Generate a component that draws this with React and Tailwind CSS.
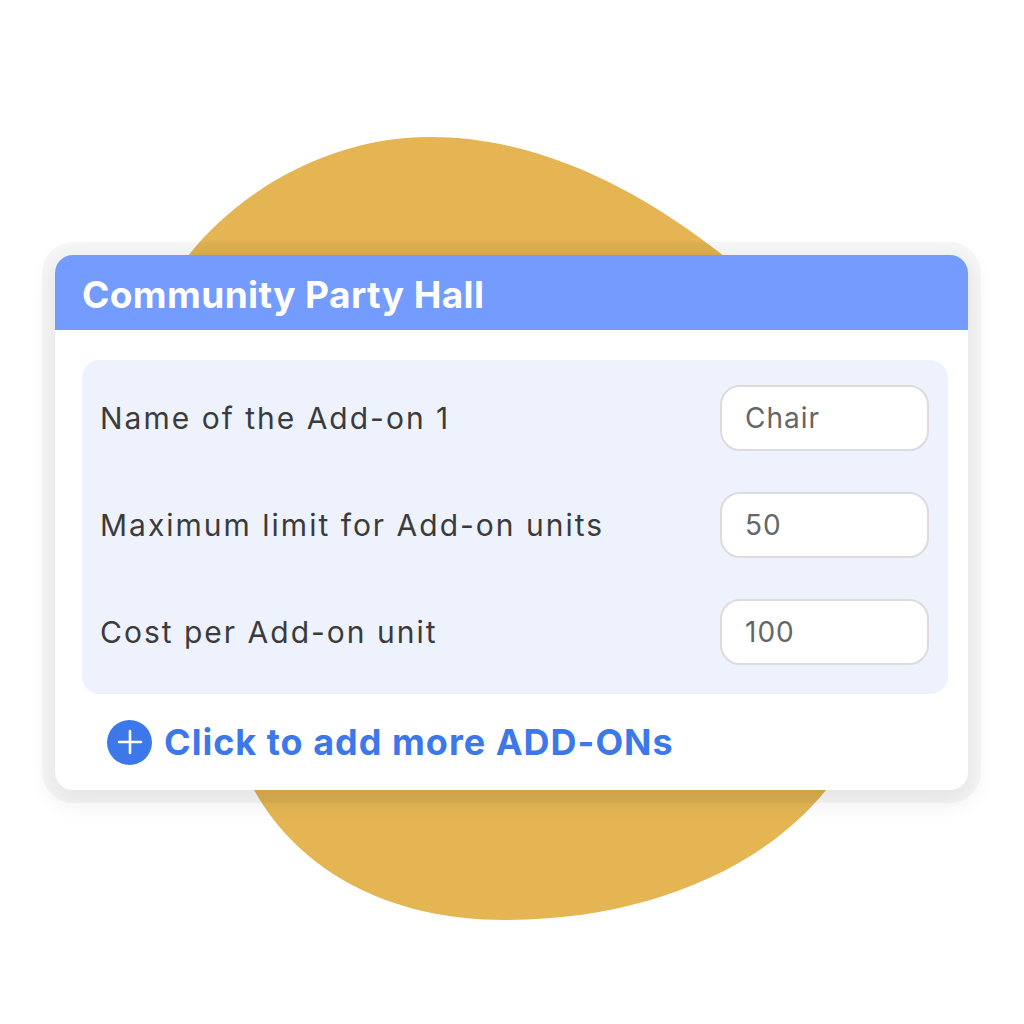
export default function App() {
  const rows = [
    { label: 'Name of the Add-on 1', value: 'Chair' },
    { label: 'Maximum limit for Add-on units', value: '50' },
    { label: 'Cost per Add-on unit', value: '100' },
  ];

  return (
    <div
      className="relative w-[1024px] h-[1024px] bg-white overflow-hidden"
      style={{ fontFamily: 'Inter, "Open Sans", sans-serif' }}
    >
      {/* yellow blob behind the card */}
      <svg className="absolute inset-0" width="1024" height="1024" viewBox="0 0 1024 1024">
        <path
          d="M430 137 C540 137 640 190 724 256 C820 330 900 600 826 790 C760 872 640 920 505 920 C390 920 300 872 254 790 C150 600 120 380 188 256 C240 190 330 137 430 137 Z"
          fill="#e4b552"
        />
      </svg>

      <div className="relative pt-[255px] pl-[55px]">
        <div className="w-[913px] h-[535px] bg-white rounded-[18px] overflow-hidden shadow-[0_0_0_13px_rgba(0,0,0,0.03),0_8px_22px_6px_rgba(0,0,0,0.07)]">
          {/* Header */}
          <div className="h-[75px] bg-[#739cfe] flex items-center px-[27px]">
            <h1 className="text-[37px] font-bold text-white tracking-[0.4px] leading-none pt-[4px]">Community Party Hall</h1>
          </div>

          {/* Add-on panel */}
          <div className="ml-[27px] mr-[20px] mt-[30px] bg-[#eef2fd] rounded-[18px] pt-[25px] pb-[29px] pl-[18px] pr-[19px] flex flex-col gap-[41px]">
            {rows.map((row) => (
              <div key={row.label} className="flex items-center justify-between h-[66px]">
                <span className="text-[30px] text-[#3b3b3b] tracking-[2px]">{row.label}</span>
                <div className="w-[209px] h-[66px] bg-white border-2 border-[#dcdcdc] rounded-[20px] flex items-center pl-[23px]">
                  <span className="text-[28px] text-[#666666] tracking-[1px]">{row.value}</span>
                </div>
              </div>
            ))}
          </div>

          {/* Add more */}
          <button className="flex items-center gap-[12px] ml-[52px] mt-[21px]">
            <span className="w-[45px] h-[45px] rounded-full bg-[#3d78ea] flex items-center justify-center">
              <svg width="26" height="26" viewBox="0 0 26 26">
                <path d="M13 2 V24 M2 13 H24" stroke="white" strokeWidth="2.6" strokeLinecap="round" />
              </svg>
            </span>
            <span className="text-[36px] font-bold text-[#3d78ea] tracking-[1px]">Click to add more ADD-ONs</span>
          </button>
        </div>
      </div>
    </div>
  );
}
